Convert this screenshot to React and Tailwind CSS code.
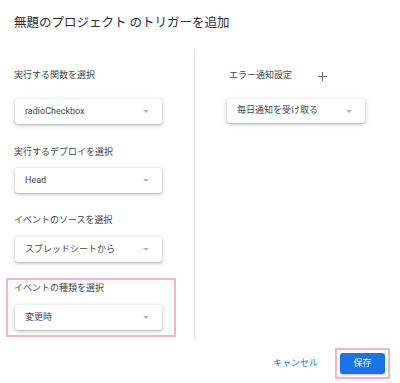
import React from 'react';

const font = { fontFamily: 'Roboto, "Noto Sans CJK JP", sans-serif' };

const Arrow = () => (
  <svg width="6" height="3" viewBox="0 0 6 3" className="ml-auto">
    <path d="M0 0 L6 0 L3 3 Z" fill="#b4b7ba" />
  </svg>
);

const Select = ({ value, width = 'w-[147px]' }) => (
  <div className={`${width} h-[25px] ml-[1px] flex items-center pl-[10px] pr-[13px] rounded-[3px] bg-white text-[9px] text-[#45484c] shadow-[0_1px_2px_0_rgba(60,64,67,0.3),0_1px_4px_1px_rgba(60,64,67,0.15)]`}>
    <span>{value}</span>
    <Arrow />
  </div>
);

const Field = ({ label, value, gap, highlight, className = '' }) => (
  <div className={`border-2 px-[6px] ${highlight ? 'border-[#f5b2cb] pt-[2px] pb-[5px]' : 'border-transparent'} ${className}`}>
    <div className="text-[9px] leading-[12px] text-[#45484c]">{label}</div>
    <div className={gap}>
      <Select value={value} />
    </div>
  </div>
);

export default function App() {
  return (
    <div className="w-[400px] h-[383px] bg-white flex flex-col overflow-hidden" style={font}>
      {/* title */}
      <div className="pl-[14px] pt-[15px] h-[50px] text-[12.5px] leading-[16px] text-[#2d2f33]">
        無題のプロジェクト のトリガーを追加
      </div>

      <div className="flex h-[290px]">
        {/* left column */}
        <div className="w-[195px] border-r border-[#e6e6e6] pl-[6px] pt-[17px]">
          <Field label="実行する関数を選択" value="radioCheckbox" gap="mt-[18px]" />
          <Field label="実行するデプロイを選択" value="Head" gap="mt-[10px]" className="mt-[18px]" />
          <Field label="イベントのソースを選択" value="スプレッドシートから" gap="mt-[11px]" className="mt-[17px]" />
          <Field label="イベントの種類を選択" value="変更時" gap="mt-[11px]" highlight className="mt-[14px] w-[170px]" />
        </div>

        {/* right column */}
        <div className="flex-1 pl-[32px] pt-[19px]">
          <div className="flex items-center h-[12px]">
            <span className="text-[9px] leading-[12px] text-[#45484c] ml-[2px]">エラー通知設定</span>
            <svg width="9" height="9" viewBox="0 0 9 9" className="ml-[26px] mt-[3px]">
              <path d="M4.5 0 V9 M0 4.5 H9" stroke="#6b6f73" strokeWidth="1.1" />
            </svg>
          </div>
          <div className="mt-[18px]">
            <div className="w-[138px] h-[24px] flex items-center pl-[10px] pr-[13px] rounded-[3px] bg-white text-[9px] text-[#45484c] shadow-[0_1px_2px_0_rgba(60,64,67,0.3),0_1px_4px_1px_rgba(60,64,67,0.15)]">
              <span>毎日通知を受け取る</span>
              <Arrow />
            </div>
          </div>
        </div>
      </div>

      {/* footer */}
      <div className="flex items-center justify-end pr-[10px] pt-[8px]">
        <span className="text-[9px] text-[#1a73e8] mr-[17px]">キャンセル</span>
        <div className="border-2 border-[#f5b2cb] p-[3px]">
          <div className="w-[45px] h-[21px] rounded-[3px] bg-[#1a73e8] text-white text-[9px] flex items-center justify-center shadow-[0_1px_2px_rgba(60,64,67,0.3)]">
            保存
          </div>
        </div>
      </div>
    </div>
  );
}
